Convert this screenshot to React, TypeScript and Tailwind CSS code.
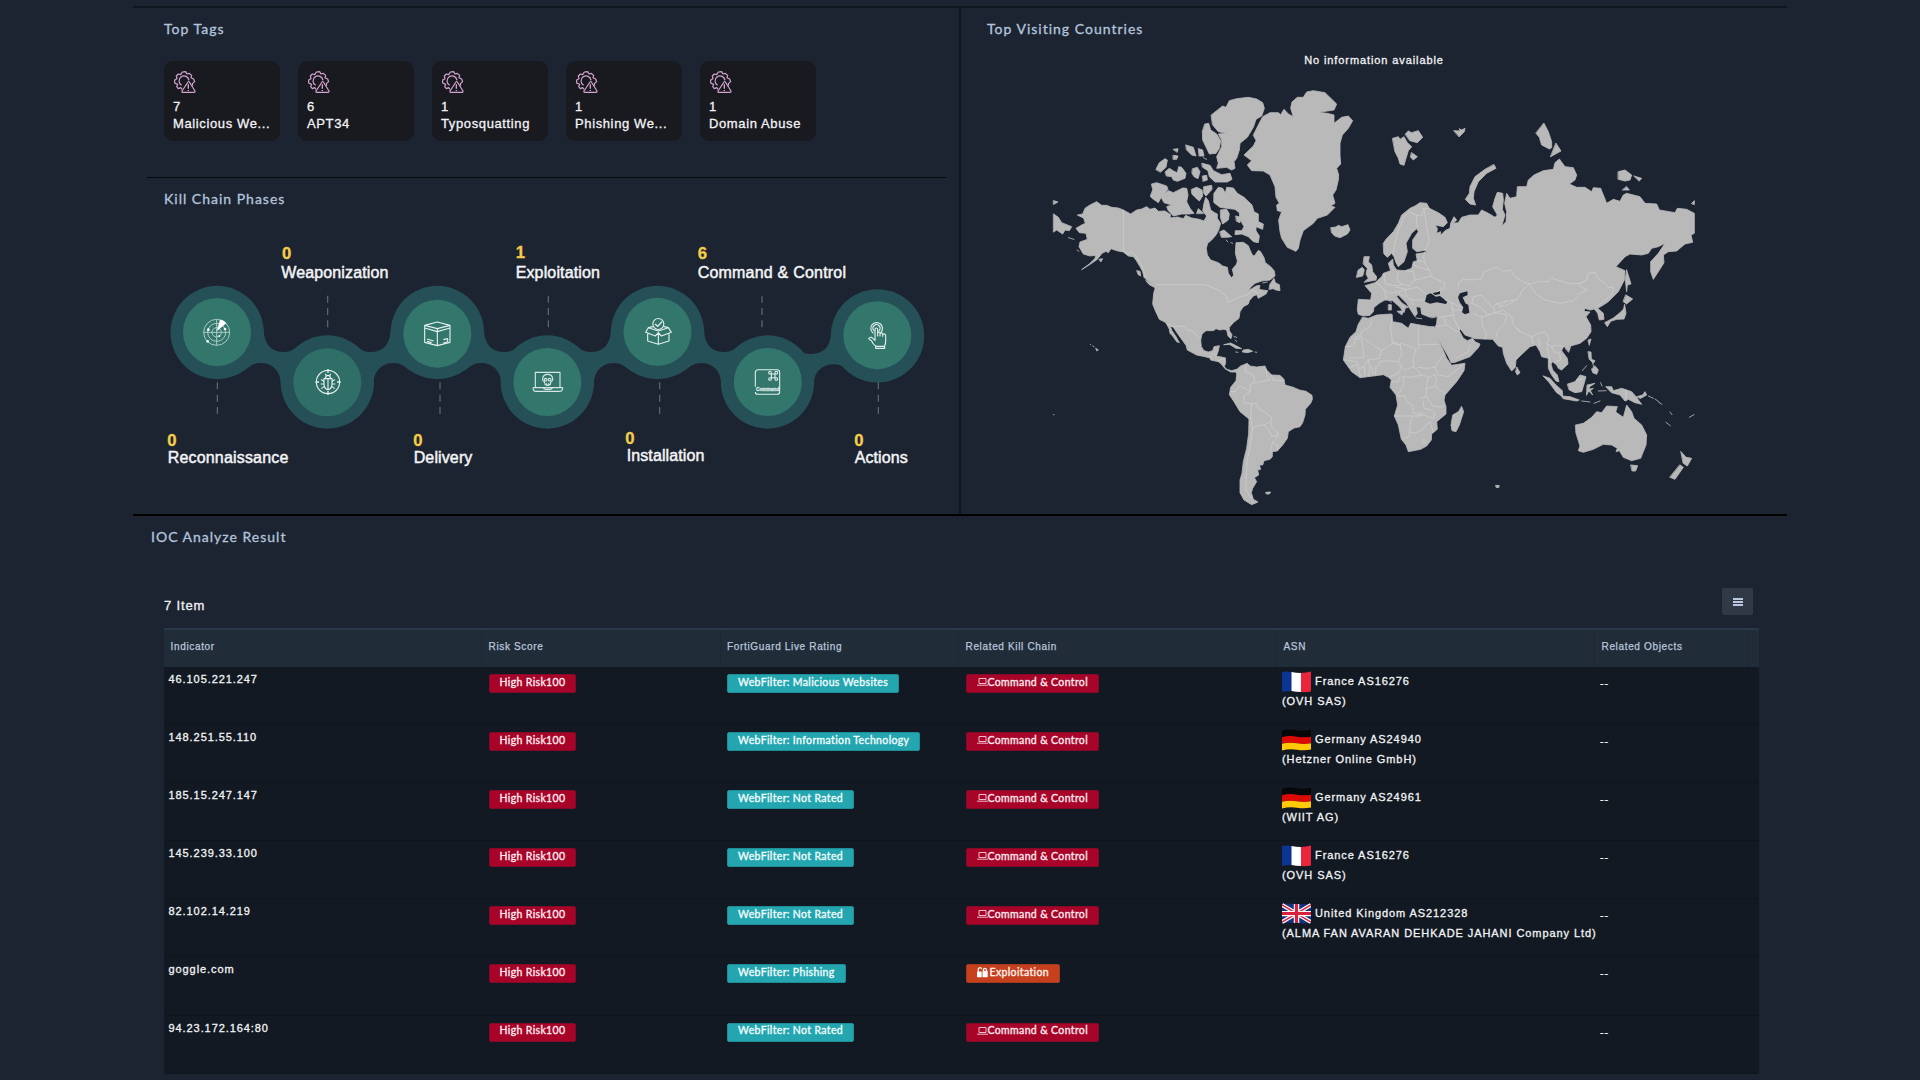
import React from 'react';

const tags = [
  { count: 7, name: 'Malicious We...' },
  { count: 6, name: 'APT34' },
  { count: 1, name: 'Typosquatting' },
  { count: 1, name: 'Phishing We...' },
  { count: 1, name: 'Domain Abuse' },
];

type Row = {
  ip: string;
  rating: string;
  chain: 'c2' | 'exploit';
  flag?: 'fr' | 'de' | 'gb';
  asn?: string;
  org?: string;
};

const rows: Row[] = [
  { ip: '46.105.221.247', rating: 'Malicious Websites', chain: 'c2', flag: 'fr', asn: 'France AS16276', org: '(OVH SAS)' },
  { ip: '148.251.55.110', rating: 'Information Technology', chain: 'c2', flag: 'de', asn: 'Germany AS24940', org: '(Hetzner Online GmbH)' },
  { ip: '185.15.247.147', rating: 'Not Rated', chain: 'c2', flag: 'de', asn: 'Germany AS24961', org: '(WIIT AG)' },
  { ip: '145.239.33.100', rating: 'Not Rated', chain: 'c2', flag: 'fr', asn: 'France AS16276', org: '(OVH SAS)' },
  { ip: '82.102.14.219', rating: 'Not Rated', chain: 'c2', flag: 'gb', asn: 'United Kingdom AS212328', org: '(ALMA FAN AVARAN DEHKADE JAHANI Company Ltd)' },
  { ip: 'goggle.com', rating: 'Phishing', chain: 'exploit' },
  { ip: '94.23.172.164:80', rating: 'Not Rated', chain: 'c2' },
];

const Heading = ({ children }: { children: React.ReactNode }) => (
  <h2 className="h-5 font-[Lato,sans-serif] text-[14px] leading-5 tracking-[1px] whitespace-nowrap text-[#b3c5dd] [-webkit-text-stroke:0.3px_#b3c5dd]">
    {children}
  </h2>
);

const TagIcon = () => (
  <svg width="22" height="22" viewBox="0 0 66 66" fill="none" stroke="#d3a4cf" strokeWidth="3.6" strokeLinejoin="round">
    <path d="M24 55 L20 50 L13 53 L8 47 L11 40 L2 36 L2 27 L9 23 L7 15 L13 9 L20 11 L25 3 L35 2 L39 9 L46 7 L53 13 L51 20 L59 24 L62 32 L55 38 L56 44" />
    <path d="M23 43 A15 15 0 1 1 45 28" />
    <path d="M42 33 Q44 30 46 33 L63 60 Q64 64 60 64 L26 64 Q23 64 24 60 Z" />
    <path d="M43 40 V53 M43 57 V60" strokeWidth="4" />
  </svg>
);

/* Bridge between two neighbouring circles; 330 units from centre to centre */
const BRIDGE =
  'M341 300 C343 345 365 366 402 366 C428 366 438 352 452 342 L532 456 L393 462 C391 420 366 399 332 399 C306 399 296 413 282 422 L201 307 Z';

const KillChain = () => (
  <svg width="800" height="250" viewBox="0 0 2400 750" className="ml-[17px] block" fontFamily="Liberation Sans, Arial, sans-serif">
    <g fill="#255057">
      <path d={BRIDGE} />
      <path d={BRIDGE} transform="translate(1063 0) scale(-1 1)" />
      <path d={BRIDGE} transform="translate(661 0)" />
      <path d={BRIDGE} transform="translate(1724 0) scale(-1 1)" />
      <path d={BRIDGE} transform="translate(1321 0)" />
      <path d={BRIDGE} transform="translate(2384 28) scale(-1 .94)" />
      <circle cx="201.500" cy="307.500" r="140" />
      <circle cx="532" cy="456" r="140" />
      <circle cx="862" cy="307.500" r="140" />
      <circle cx="1192" cy="456" r="140" />
      <circle cx="1522.500" cy="307.500" r="140" />
      <circle cx="1852.500" cy="456" r="140" />
      <circle cx="2182.500" cy="317.500" r="140" />
    </g>
    <g fill="#33766c">
      <circle cx="201" cy="306" r="102" />
      <circle cx="532" cy="457" r="102" fill="#306e68" />
      <circle cx="862" cy="311" r="102" />
      <circle cx="1192" cy="456" r="102" />
      <circle cx="1522.500" cy="305.500" r="102" />
      <circle cx="1853.500" cy="456" r="102" />
      <circle cx="2182" cy="315.500" r="102" />
    </g>
    <g stroke="#626975" strokeWidth="3.500" strokeDasharray="21 16">
      <path d="M533 197 V292 M1195 197 V292 M1836 197 V292" />
      <path d="M202 457 V552 M870 457 V552 M1529 457 V552 M2185 457 V552" />
    </g>

    {/* radar */}
    <g fill="none" stroke="#a9cbc5" strokeWidth="3">
      <circle cx="200" cy="307" r="39" />
      <circle cx="200" cy="307" r="27" />
      <circle cx="200" cy="307" r="14" />
      <path d="M161 307 H239 M200 268 V346" />
      <path d="M200 304 L210 269 Q222 270 229 280 Z" fill="#fff" stroke="none" />
      <g fill="#fff" stroke="none">
        <circle cx="175" cy="299" r="4" />
        <circle cx="225" cy="297" r="4" />
        <circle cx="208" cy="318" r="3" />
        <circle cx="173" cy="334" r="4" />
      </g>
    </g>
    {/* bug in crosshair */}
    <g fill="none" stroke="#e3efed" strokeWidth="3.400">
      <circle cx="534" cy="456" r="35" />
      <path d="M534 417 V429 M534 483 V495 M496 456 H507 M561 456 H572" strokeWidth="4" />
      <path d="M522 446 H546 V464 Q544 478 534 479 Q524 478 522 464 Z M526 446 Q527 436 534 436 Q541 436 542 446 M534 446 V479 M522 455 L513 448 M522 462 H512 M523 469 L514 476 M546 455 L555 448 M546 462 H556 M545 469 L554 476 M529 438 L526 431 M539 438 L542 431" />
    </g>
    {/* package */}
    <g fill="none" stroke="#e3efed" strokeWidth="3.400" strokeLinejoin="round">
      <path d="M824 286 L862 276 L900 286 L862 296 Z M824 286 V337 L862 347 L900 337 V286 M862 296 V347 M824 294 L862 305 L900 294" />
      <path d="M831 327 L851 333 M831 334 L845 338 M880 329 L893 326 V335 L880 339" />
    </g>
    {/* laptop with skull */}
    <g transform="translate(1170 0)" fill="none" stroke="#d5e6e3" strokeWidth="3.400" strokeLinejoin="round">
      <path d="M-14 472 V427 H60 V472 M-21 473 H68 Q68 484 58 484 H-12 Q-21 484 -21 473 M10 474 Q12 478 17 478 H30 Q35 478 37 474" />
      <path d="M14 460 V456 Q7 453 8 446 Q9 433 23 433 Q37 433 38 446 Q39 453 32 456 V460 Q31 466 23 466 Q15 466 14 460 M20 460 V465 M26 460 V465" />
      <circle cx="17" cy="449" r="4" />
      <circle cx="29" cy="449" r="4" />
    </g>
    {/* open box with check */}
    <g transform="translate(1170 0)" fill="none" stroke="#e3efed" strokeWidth="3.400" strokeLinejoin="round" strokeLinecap="round">
      <circle cx="355" cy="282" r="16.500" />
      <path d="M346 283 L353 289 L365 276" strokeWidth="4" />
      <path d="M339 290 L325 293 L317 307 L346 318 L355 308 L364 318 L394 307 L385 293 L372 290 M325 293 L355 303 L385 293 M323 311 V333 L355 343 L387 333 V311 M355 308 V343" />
    </g>
    {/* command key */}
    <g transform="translate(1170 0)" fill="none" stroke="#e3efed" strokeWidth="3.200">
      <path d="M646 470 V428 Q646 419 655 419 H711 Q719 419 719 427 V485 Q719 493 711 493 H654 Q646 493 646 486" />
      <path d="M694 432 H705 V443 H694 Z M694 432 V428 A4 4 0 1 0 690 432 Z M705 432 H709 A4 4 0 1 0 705 428 Z M705 443 V447 A4 4 0 1 0 709 443 Z M694 443 H690 A4 4 0 1 0 694 447 Z" />
      <text x="648" y="484" fontSize="17" fontWeight="700" fill="#e3efed" stroke="#e3efed" strokeWidth=".8" textLength="70" lengthAdjust="spacingAndGlyphs">Command</text>
    </g>
    {/* tapping hand */}
    <g transform="translate(1170 0)" fill="none" stroke="#e3efed" strokeWidth="3.400" strokeLinejoin="round" strokeLinecap="round">
      <path d="M999 309 A17.500 17.500 0 1 1 1023 307 M1002 302 A10.500 10.500 0 1 1 1017 302" />
      <path d="M1005 331 V299 Q1005 294 1009 294 Q1013 294 1013 299 V318 M1013 310 Q1014 305 1020 307 V318 M1020 311 Q1027 306 1028 313 V319 M1028 313 Q1036 309 1037 317 V334 Q1037 341 1034 347 V355 H1007 V348 Q999 343 995 333 L986 326 Q988 321 995 322 L1005 331 M1007 349 H1034" />
    </g>

    <g fill="#f5cc4a" stroke="#f5cc4a" strokeWidth="1" fontWeight="700" fontSize="50">
      <text x="396" y="86">0</text>
      <text x="1097" y="83">1</text>
      <text x="1643" y="86">6</text>
      <text x="52" y="649">0</text>
      <text x="790" y="649">0</text>
      <text x="1426" y="643">0</text>
      <text x="2113" y="649">0</text>
    </g>
    <g fill="#f4f5f7" stroke="#f4f5f7" strokeWidth="1.400" fontSize="48">
      <text x="394" y="144" textLength="321">Weaponization</text>
      <text x="1097" y="144" textLength="253">Exploitation</text>
      <text x="1643" y="144" textLength="445">Command &amp; Control</text>
      <text x="53" y="699" textLength="362">Reconnaissance</text>
      <text x="791" y="699" textLength="176">Delivery</text>
      <text x="1430" y="693" textLength="233">Installation</text>
      <text x="2114" y="699" textLength="159">Actions</text>
    </g>
  </svg>
);

const WorldMap = () => (
  <svg width="740" height="430" viewBox="0 0 2220 1290" className="ml-[79px] block" strokeLinejoin="round" strokeLinecap="round">
    <g fill="#b9b9b9" stroke="#b9b9b9" strokeWidth="2.500">
      {/* North and Central America */}
      <path d="M113 405 L128 402 L135 385 L150 375 L170 365 L185 376 L200 376 L215 382 L235 384 L250 390 L272 402 L290 390 L305 387 L320 380 L330 388 L345 384 L355 394 L375 393 L392 404 L390 414 L412 411 L430 416 L437 406 L455 414 L478 418 L492 423 L500 408 L488 393 L492 370 L497 352 L505 362 L512 390 L524 398 L532 402 L532 415 L542 430 L536 450 L528 465 L515 480 L503 490 L499 505 L502 525 L512 540 L535 548 L548 558 L562 562 L565 580 L575 594 L581 585 L577 568 L590 552 L592 542 L586 520 L588 488 L610 487 L625 497 L630 510 L637 525 L643 528 L655 511 L662 515 L672 533 L676 548 L692 560 L703 573 L705 588 L690 600 L665 603 L645 610 L632 622 L626 632 L648 618 L660 616 L657 628 L668 630 L683 632 L678 642 L655 655 L650 644 L640 648 L628 662 L625 672 L610 680 L600 695 L597 715 L580 728 L568 742 L568 752 L576 764 L573 776 L564 768 L560 750 L550 748 L540 750 L528 746 L520 752 L498 752 L486 762 L482 780 L484 800 L492 812 L505 816 L518 812 L522 800 L538 797 L535 812 L529 830 L540 830 L556 834 L557 848 L553 860 L560 868 L575 872 L590 868 L590 876 L572 876 L555 866 L544 852 L535 845 L512 840 L510 834 L495 830 L470 825 L442 810 L438 796 L428 782 L415 764 L400 742 L390 738 L396 752 L408 770 L418 788 L410 785 L398 768 L390 760 L388 748 L378 728 L358 718 L345 690 L338 672 L341 640 L346 622 L338 612 L320 600 L312 592 L308 575 L300 560 L288 540 L280 530 L265 528 L250 516 L230 512 L213 506 L205 518 L198 514 L186 520 L172 538 L155 550 L125 569 L148 552 L164 536 L168 526 L150 528 L130 522 L117 500 L120 486 L142 478 L138 460 L118 458 L108 445 L125 435 L136 430 L131 415 Z" />
      <path d="M41 402 L55 412 L65 428 L95 440 L88 452 L75 450 L68 462 L50 450 L41 456 Z M41 362 L54 366 L41 373 Z M85 473 L102 478 M111 510 L117 514 M178 538 L188 536 L183 545 Z M291 572 L300 574 L302 588 L295 584 Z M318 602 L345 616 L347 624 L328 614 Z M690 612 L702 595 L706 608 L718 614 L720 632 L708 630 L700 626 L688 628 Z M668 609 L682 606" />
      {/* Arctic archipelago */}
      <path d="M514 105 L530 92 L548 78 L558 82 L568 62 L590 56 L625 52 L650 57 L668 68 L673 85 L665 108 L648 118 L640 142 L622 172 L600 190 L598 210 L590 235 L582 245 L585 265 L575 270 L560 262 L530 265 L535 250 L530 230 L545 200 L545 180 L535 162 L560 160 L535 155 L518 135 Z" />
      <path d="M495 132 L506 130 L512 150 L530 162 L542 182 L538 205 L528 220 L508 222 L500 205 L488 180 L487 155 Z M438 195 L460 202 L468 228 L455 225 L440 210 Z M476 206 L488 210 L492 228 L478 228 Z M400 208 L414 206 L412 216 Z M400 226 L414 228 L410 238 L400 238 Z M348 268 L358 248 L375 236 L382 240 L378 262 L362 276 Z M376 275 L388 265 L402 274 L412 278 L416 260 L425 262 L438 280 L435 295 L412 304 L400 300 L395 290 L380 288 Z M458 266 L472 262 L480 275 L474 296 L462 290 L456 280 Z M486 250 L510 256 L520 272 L545 284 L570 280 L576 298 L562 306 L525 306 L508 290 L504 272 L488 262 Z M488 288 L500 286 L502 300 L490 304 Z M490 233 L500 238" />
      <path d="M335 312 L350 308 L380 318 L384 328 L372 342 L362 355 L355 368 L335 354 L331 348 L338 330 Z M368 345 L385 332 L400 338 L412 332 L428 324 L440 325 L444 345 L440 365 L450 385 L462 400 L448 402 L425 402 L400 408 L385 392 L380 380 L395 375 L372 368 L365 355 Z M455 328 L470 322 L486 330 L488 348 L478 363 L465 352 L456 342 Z M492 320 L515 316 L516 328 L498 348 L490 338 Z M470 400 L475 386 L490 400 Z" />
      <path d="M522 340 L535 322 L548 325 L556 340 L560 322 L580 324 L592 340 L612 352 L636 375 L642 395 L655 402 L655 425 L670 432 L668 448 L648 440 L648 452 L658 468 L655 488 L640 485 L625 470 L605 462 L585 464 L586 452 L605 452 L612 440 L600 418 L598 398 L585 388 L560 385 L540 382 L522 368 Z M542 390 L560 388 L568 402 L565 420 L548 432 L542 415 Z M540 455 L552 450 L575 470 L560 472 L545 472 Z M588 408 L602 412 L600 428 L590 424 Z M558 480 L564 486 M573 488 L578 490" />
      {/* Greenland, Iceland */}
      <path d="M640 165 L655 135 L668 110 L690 98 L715 98 L722 104 L732 88 L745 102 L760 110 L752 85 L756 66 L772 52 L790 52 L800 36 L820 32 L855 38 L890 72 L882 90 L835 97 L862 100 L882 105 L882 130 L905 112 L925 108 L938 122 L925 145 L907 165 L900 190 L900 225 L902 252 L890 265 L896 285 L895 300 L888 330 L878 345 L885 370 L872 378 L885 382 L862 405 L832 415 L820 430 L790 452 L780 480 L775 505 L768 514 L742 502 L725 475 L720 455 L716 420 L725 395 L712 392 L710 375 L718 370 L708 352 L705 320 L690 285 L670 273 L635 272 L622 255 L635 242 L612 225 L640 198 L648 182 Z" />
      <path d="M873 443 L888 441 L895 436 L905 440 L924 434 L930 450 L922 462 L900 473 L884 468 L875 458 Z" />

      {/* South America and the Caribbean */}
      <g transform="translate(0 600)">
        <path d="M588 270 L602 258 L622 250 L630 258 L650 261 L675 258 L680 270 L695 285 L720 286 L732 298 L735 315 L760 322 L778 330 L798 334 L816 346 L817 358 L812 370 L796 388 L795 405 L788 428 L780 440 L762 444 L745 455 L742 475 L728 495 L712 513 L697 515 L697 530 L690 538 L672 542 L668 555 L658 555 L662 568 L653 570 L656 585 L643 593 L650 605 L638 625 L634 638 L640 658 L654 666 L635 674 L612 660 L600 638 L600 600 L606 580 L610 545 L620 505 L626 460 L627 417 L600 395 L582 365 L568 344 L572 322 L588 302 L590 285 Z" />
        <path d="M552 194 L572 189 L590 198 L605 206 L588 205 L570 194 Z M610 210 L625 208 L638 214 L622 218 L608 216 Z M587 216 L594 217 M645 216 L650 217 M582 170 L590 172 M586 180 L590 185 M678 637 L692 636 L688 642 L680 642 Z M168 205 L175 210 L171 212 Z M158 198 L162 200 M151 194 L152 194 M40 404 L42 404" />
      </g>

      {/* Europe and Asia */}
      <g transform="translate(870 0)">
        <path d="M160 490 L168 478 L190 455 L205 430 L215 405 L240 385 L255 378 L270 368 L290 370 L298 385 L325 398 L345 412 L352 428 L340 440 L315 435 L322 445 L320 460 L332 455 L332 466 L345 452 L360 445 L362 430 L372 410 L380 420 L370 430 L385 428 L395 412 L420 405 L445 405 L455 390 L475 400 L495 412 L502 405 L488 380 L495 355 L502 337 L518 340 L520 360 L517 388 L525 405 L515 438 L528 425 L530 395 L524 370 L530 340 L540 355 L560 350 L562 320 L590 320 L595 300 L612 285 L640 272 L670 268 L675 248 L688 237 L705 260 L730 263 L740 285 L735 300 L718 312 L740 322 L765 322 L785 335 L790 323 L812 325 L820 345 L830 370 L850 358 L870 364 L880 345 L890 340 L930 350 L945 370 L980 372 L988 390 L1035 398 L1042 385 L1070 388 L1093 400 L1093 460 L1083 465 L1088 487 L1065 492 L1040 513 L1015 515 L1000 525 L1002 548 L985 575 L970 598 L962 575 L962 545 L985 520 L1005 490 L985 500 L965 505 L955 520 L935 525 L900 522 L885 530 L858 560 L885 572 L883 600 L865 635 L835 665 L820 675 L803 685 L820 700 L822 718 L808 720 L803 700 L793 687 L780 690 L765 685 L762 694 L780 696 L768 710 L782 735 L783 755 L770 775 L750 790 L725 797 L712 803 L700 800 L695 812 L712 835 L714 852 L695 870 L685 865 L680 855 L668 845 L663 852 L668 870 L682 885 L687 905 L678 903 L665 885 L655 865 L655 835 L635 830 L630 815 L618 795 L600 800 L570 828 L558 840 L556 862 L545 873 L530 850 L520 820 L518 802 L505 798 L488 778 L435 776 L425 772 L405 765 L392 748 L388 752 L400 775 L412 782 L428 775 L435 785 L450 792 L446 802 L420 830 L375 847 L363 848 L355 830 L335 795 L315 762 L313 750 L320 730 L322 709 L300 712 L275 702 L272 682 L258 680 L262 700 L255 710 L242 690 L230 670 L205 645 L200 650 L215 668 L235 682 L226 684 L222 698 L210 682 L188 662 L165 660 L150 668 L132 682 L130 695 L120 706 L100 708 L85 703 L82 690 L85 658 L122 660 L125 640 L105 617 L135 608 L155 590 L160 580 L182 572 L175 550 L188 537 L190 555 L200 570 L225 572 L245 565 L250 545 L262 542 L258 522 L290 517 L285 511 L260 515 L248 505 L248 480 L265 455 L260 446 L245 460 L228 490 L232 515 L222 545 L205 560 L198 548 L192 530 L185 520 L172 532 L162 522 Z" />
        <path d="M188 175 L205 170 L210 178 L222 170 L232 188 L245 200 L235 212 L228 235 L222 256 L210 252 L205 235 L195 215 Z M226 162 L235 153 L245 158 L265 152 L278 172 L262 188 L240 182 Z M245 218 L262 230 L250 240 L242 232 Z M372 152 L390 153 L388 146 L395 150 L405 145 L403 155 L388 170 Z M492 254 L498 265 L470 280 L445 305 L432 335 L430 355 L437 375 L420 372 L406 358 L418 340 L420 320 L435 290 L465 268 Z M642 130 L655 155 L665 185 L665 203 L658 207 L635 195 L628 172 L618 160 Z M678 190 L693 213 L662 230 Z M865 275 L885 270 L905 285 L900 300 L885 303 L865 298 Z M912 288 L935 295 L928 303 Z M890 320 L898 330 L878 330 Z M1085 370 L1093 362 L1093 373 Z" />
        <path d="M103 530 L118 530 L115 545 L125 555 L128 575 L140 590 L138 600 L102 607 L115 595 L108 582 L112 565 L100 552 Z M85 570 L97 562 L103 570 L98 588 L80 592 Z M890 570 L903 612 L892 615 L890 635 L886 600 Z M888 645 L908 657 L890 672 L880 665 Z M884 674 L888 700 L882 717 L860 718 L842 724 L832 740 L824 728 L850 714 L868 700 L880 688 Z M176 674 L184 674 L184 690 L176 690 Z M178 662 L184 668 M202 694 L220 692 L216 704 Z M258 714 L275 716 M305 714 L318 711 M775 780 L783 777 L778 795 Z M706 804 L722 800 L716 816 Z M561 862 L570 878 L562 885 L557 876 Z" />
      </g>

      {/* Africa, South-East Asia and Oceania */}
      <g transform="translate(870 600)">
        <path d="M98 112 L115 115 L140 105 L185 102 L188 125 L215 130 L235 145 L242 130 L270 135 L300 140 L313 140 L318 165 L335 200 L350 235 L365 256 L405 250 L402 272 L380 305 L345 345 L342 360 L348 380 L348 402 L320 425 L322 448 L305 462 L304 480 L290 498 L272 508 L235 515 L228 495 L214 478 L205 435 L193 408 L203 375 L198 345 L180 322 L184 300 L175 292 L160 284 L130 288 L90 293 L65 275 L40 240 L46 200 L60 172 L78 155 L84 135 Z" />
        <path d="M395 380 L401 395 L388 435 L378 455 L366 452 L363 435 L368 405 L385 395 Z M640 288 L660 295 L678 315 L697 332 L698 350 L680 338 L658 308 Z M695 348 L720 350 L748 360 L740 363 L700 356 Z M713 312 L735 305 L750 285 L768 290 L762 312 L755 335 L735 338 L718 330 Z M772 315 L795 310 L779 320 L777 328 L790 325 L781 332 L788 345 L776 333 L770 345 Z M828 320 L845 320 L850 332 L875 325 L905 335 L918 350 L935 373 L915 368 L895 358 L885 363 L870 345 L845 338 Z M920 350 L938 345 L945 335 L950 345 L932 355 Z M775 215 L783 216 L784 238 L795 242 L790 250 L778 238 Z M795 258 L805 270 L800 283 L788 278 L785 268 Z M757 272 L770 257 M788 250 L792 262 M812 308 L816 318 M755 363 L780 366 M792 370 L810 363 M805 333 L828 332 M955 348 L970 355 M975 357 L985 364 M985 366 L996 373 M1020 396 L1026 404 M1008 427 L1021 437 M1078 412 L1092 404" />
        <path d="M737 435 L760 430 L785 412 L800 395 L815 398 L830 378 L862 380 L857 396 L880 412 L890 375 L905 395 L912 415 L935 435 L950 465 L948 495 L932 535 L905 542 L880 532 L868 512 L858 515 L862 505 L845 495 L820 493 L790 508 L760 517 L745 512 L750 498 L738 460 Z M903 555 L923 557 L917 573 L907 573 Z M1053 515 L1068 532 L1085 535 L1072 558 L1060 550 Z M1050 555 L1060 562 L1035 598 L1020 592 Z M498 616 L508 617 L506 623 L499 622 Z" />
      </g>
    </g>

    {/* enclosed seas */}
    <g fill="#1d2431" transform="translate(870 0)">
      <path d="M285 665 L290 645 L302 640 L318 650 L330 648 L352 665 L348 672 L320 667 L300 671 Z M308 640 L330 634 L330 642 L315 645 Z M384 652 L390 640 L412 634 L413 645 L398 652 L406 670 L415 675 L418 698 L405 703 L396 697 L400 682 L390 668 Z" />
    </g>

    {/* country borders */}
    <g fill="none" stroke="#d2d2d2" strokeWidth="2">
      <path d="M250 390 V513 M250 513 L262 522 L275 515 L290 530 L300 548 L310 565 L315 590 M348 614 H495 L515 622 L540 632 L560 650 L565 668 L580 660 L600 650 L622 645 L635 630 L655 640 M378 730 L400 740 L430 738 L445 752 L458 752 L475 772 L483 778 M510 832 L522 820 L530 830 M535 842 L555 834" />
      <g transform="translate(0 600)">
        <path d="M618 255 L615 275 L640 285 L645 305 L632 312 L630 335 M678 268 L680 285 L690 300 L665 305 L645 308 M695 285 L697 300 L730 302 M573 335 L585 335 L598 318 L615 325 L630 335 L610 350 L612 368 L635 372 L648 370 L655 385 L680 400 L695 412 L692 425 L672 435 L645 438 L637 448 L632 415 M635 372 L632 415 M637 448 L632 490 L622 540 L618 590 L618 630 L635 655 M692 425 L697 445 L713 458 L708 468 L695 468 M672 435 L690 455 L695 468 M713 458 L715 470 L697 488 L692 510 M697 488 L715 498 L712 510" />
      </g>
      <g transform="translate(870 0)">
        <path d="M190 520 L195 490 L205 450 L222 410 L240 395 L258 405 L275 408 L282 385 L298 385 M258 405 L262 440 M282 385 L290 440 L298 485 L285 510 M285 515 L280 530 L285 550 L298 570 L305 590 L345 610 L342 625 L320 635 M262 542 L280 545 M250 555 L275 565 L298 570 M225 572 L250 575 L255 600 L290 592 L305 590 M162 582 L165 610 L180 615 L205 618 L215 612 L200 600 L205 575 M215 612 L235 618 L255 600 M165 630 L180 640 L205 635 L225 630 L245 625 L262 622 L285 640 M225 630 L230 650 L245 660 L280 660 M245 660 L250 675 M205 640 L225 650 M200 622 L230 628 M138 608 L160 625 L165 640 L168 655" />
        <path d="M345 660 L370 670 L390 680 M365 668 L370 705 L340 710 L325 712 M370 690 L395 690 M385 625 L385 608 L400 598 L430 600 L455 595 L462 575 L500 562 L520 575 L542 570 L555 590 L580 605 L598 612 L578 630 L570 645 L560 660 L535 662 L498 672 L490 682 L470 665 L455 645 L430 650 L425 670 M598 612 L625 605 L655 605 L660 593 L700 605 L720 612 L750 610 L770 600 L775 580 L795 577 L805 595 L825 610 L835 622 L850 622 L848 640 L832 655 L800 680 M598 612 L615 640 L645 660 L690 670 L730 662 L750 640 L772 630 L750 618 L750 610 M425 670 L450 680 L475 705 L495 698 L490 682 M495 698 L520 690 L530 700 L545 710 L550 735 L570 755 L605 770 L625 760 L645 755 L658 775 L650 790 L665 800 L682 795 L700 800 M495 698 L510 700 L530 705 L525 730 L505 750 L498 770 M475 705 L455 712 L458 740 L470 760 L465 778 M455 712 L430 700 M370 705 L375 725 L388 745 L385 755 M340 712 L350 735 L380 755 M320 740 L345 735 M570 755 L562 745 M605 770 L610 790 M625 775 L630 800 M650 790 L655 820 L660 845 M665 800 L672 815 L688 818 L692 840 L675 845" />
        <path d="M378 835 L415 815 L420 795 M500 672 L520 680 L550 665 M530 662 L505 685" />
      </g>
      <g transform="translate(870 600)">
        <path d="M125 118 L122 138 L95 155 L90 168 L78 170 M187 105 L182 145 L187 185 L210 195 L215 190 M46 200 L72 198 L75 175 L95 178 L102 232 L58 235 M90 168 L155 212 L187 190 M265 138 V205 M265 193 H325 M215 190 L258 208 M155 212 L148 235 L115 240 L100 262 L85 265 M187 190 L210 195 L215 220 L205 245 L170 242 L150 245 L145 260 M45 240 L80 245 L85 265 L92 290 M62 262 L80 255 M115 240 L120 262 L115 287 M125 260 L130 285 M138 258 L137 285 M103 262 L105 288 M205 245 L215 260 L205 280 L180 290 M258 208 L250 235 L252 260 L225 270 L215 260 M252 260 L275 285 L295 292 L315 285 M265 262 L290 265 L315 262 L340 222 M315 262 L325 285 L355 290 L380 270 L400 252 M218 290 L245 292 L275 285 M218 290 L222 310 L210 335 L200 345 M185 305 L205 305 L210 290 M200 348 L225 348 L232 365 L248 375 L250 400 L275 400 L262 408 L193 408 M295 292 L290 320 L288 350 L300 365 L310 380 L340 380 M315 285 L320 300 L315 318 L345 340 M288 325 L315 320 M288 350 L270 355 M280 365 L282 385 L305 390 L315 400 L310 415 L300 412 L280 405 L262 408 M245 412 L240 440 L238 470 L222 475 M240 455 L255 460 L275 450 L300 425 M300 425 L310 455 M275 485 L283 478 L288 485 L280 490 Z M888 330 V362 M740 300 L755 298" />
      </g>
    </g>
  </svg>
);

const FlagBody = ({ kind }: { kind: 'fr' | 'de' | 'gb' }) => {
  if (kind === 'fr')
    return (
      <g>
        <path d="M0 1 Q5 0 9.500 1 V21 Q5 21 0 22 Z" fill="#0a3594" />
        <path d="M9.500 1 Q14 2 19 2 V22 Q14 22 9.500 21 Z" fill="#fff" />
        <path d="M19 2 Q24 2 29 .5 V21.500 Q24 22.500 19 22 Z" fill="#e8253a" />
      </g>
    );
  if (kind === 'de')
    return (
      <g>
        <path d="M0 1.500 Q7 -.5 15 1.200 Q23 2.500 29 .7 V8 Q22 9.500 15 8 Q7 6.500 0 8.500 Z" fill="#070707" />
        <path d="M0 8.500 Q7 6.500 15 8 Q22 9.500 29 8 V15 Q22 16.500 15 15 Q7 13.500 0 15.500 Z" fill="#dc0a04" />
        <path d="M0 15.500 Q7 13.500 15 15 Q22 16.500 29 15 V21.500 Q22 23 15 21.700 Q7 20.500 0 22.500 Z" fill="#ffc90a" />
      </g>
    );
  return (
    <g>
      <path d="M0 1 Q7 0 15 1 Q22 2 29 .7 V21 Q22 22 15 21 Q7 20 0 21.500 Z" fill="#16327c" />
      <path d="M0 2 L29 20 M29 2 L0 20" stroke="#fff" strokeWidth="4.200" />
      <path d="M0 2 L29 20 M29 2 L0 20" stroke="#d9203d" strokeWidth="1.500" />
      <path d="M14.500 1 V21 M0 11 H29" stroke="#fff" strokeWidth="5.500" />
      <path d="M14.500 1 V21 M0 11 H29" stroke="#d9203d" strokeWidth="3.200" />
    </g>
  );
};

const Flag = ({ kind }: { kind: 'fr' | 'de' | 'gb' }) => (
  <svg width="29" height="22" viewBox="0 0 29 23" preserveAspectRatio="none" className="shrink-0">
    <FlagBody kind={kind} />
  </svg>
);

const LaptopIcon = () => (
  <svg width="11" height="10" viewBox="0 0 11 10" className="shrink-0" fill="none" stroke="#f0bcc7" strokeWidth="1">
    <path d="M2 6.500 V1.500 H9 V6.500 Z M0 8.200 H11" />
  </svg>
);

const LocksIcon = () => (
  <svg width="11" height="11" viewBox="0 0 11 11" className="mr-[2px] shrink-0" fill="#fff">
    <path d="M6.300 4 V2.500 A1.700 1.700 0 0 1 9.500 2.500 V4" fill="none" stroke="#fff" strokeWidth="1.200" />
    <path d="M1.300 5 V3 A1.700 1.700 0 0 1 4.600 2" fill="none" stroke="#fff" strokeWidth="1.200" />
    <rect x="0" y="4.500" width="4.700" height="5.800" rx=".9" />
    <rect x="5.500" y="3.800" width="5.200" height="6.500" rx=".9" />
  </svg>
);

const badge =
  'flex h-[19px] items-center rounded-[2px] border px-[10px] pb-[3px] font-[Lato,sans-serif] text-[10.500px] leading-none tracking-[0.36px] whitespace-nowrap';
const redBadge = 'border-[#850a28] bg-[#a80328] text-[#fbe9ed] [-webkit-text-stroke:0.35px_#fbe9ed]';
const badgeCell = 'flex items-start pt-[7px] pl-[6.500px]';

const COLS = 'grid grid-cols-[318px_238.500px_238.500px_318px_318px_152.500px_1fr]';
const cellText =
  'text-[11px] leading-4 tracking-[0.92px] text-[#f2f3f5] [-webkit-text-stroke:0.3px_#f2f3f5] whitespace-nowrap';

export default function App() {
  return (
    <div className="h-[1080px] w-[1920px] overflow-hidden bg-[#1d2431] pt-[6px] font-['Liberation_Sans',Arial,sans-serif]">
      <main className="ml-[133px] w-[1654px]">
        <section className="flex h-[510px] border-t-2 border-b-2 border-t-[#10161e] border-b-black">
          <div className="w-[828px] border-r-2 border-[#10161e]">
            <div className="mt-[11px] ml-[31px]">
              <Heading>Top Tags</Heading>
            </div>
            <div className="mt-[22px] ml-[31px] flex gap-[18px]">
              {tags.map((t) => (
                <div key={t.name} className="h-20 w-[116px] rounded-[9px] bg-[#191920] pt-[10px] pl-[9px]">
                  <div className="pl-px">
                    <TagIcon />
                  </div>
                  <div className="mt-[5px] text-[13px] leading-[17px] tracking-[0.62px] whitespace-nowrap text-[#f2f3f5] [-webkit-text-stroke:0.3px_#f2f3f5]">
                    <div>{t.count}</div>
                    <div>{t.name}</div>
                  </div>
                </div>
              ))}
            </div>
            <div className="mt-9 ml-[14px] h-px w-[799px] bg-[#06090d]" />
            <div className="mt-[11px] ml-[31px]">
              <Heading>Kill Chain Phases</Heading>
            </div>
            <div className="mt-[21px]">
              <KillChain />
            </div>
          </div>
          <div className="w-[826px]">
            <div className="mt-[11px] ml-[26px]">
              <Heading>Top Visiting Countries</Heading>
            </div>
            <div className="mt-[13px] text-center text-[11px] leading-4 tracking-[0.9px] text-[#f2f3f5] [-webkit-text-stroke:0.3px_#f2f3f5]">
              No information available
            </div>
            <div className="mt-3">
              <WorldMap />
            </div>
          </div>
        </section>

        <section>
          <div className="ml-[18px] pt-[11px]">
            <Heading>IOC Analyze Result</Heading>
          </div>
          <div className="mt-[41px] ml-[31px] flex h-10 w-[1589px] items-start justify-between">
            <div className="mt-2 text-[13px] leading-5 tracking-[0.85px] text-[#f2f3f5] [-webkit-text-stroke:0.3px_#f2f3f5]">7 Item</div>
            <button className="flex h-[27px] w-[31px] flex-col items-center justify-center gap-px rounded-[2px] bg-[#323946]">
              <span className="h-[2px] w-[10px] bg-[#b9c9e0]" />
              <span className="h-[2px] w-[10px] bg-[#b9c9e0]" />
              <span className="h-[2px] w-[10px] bg-[#b9c9e0]" />
            </button>
          </div>
          <div className="ml-[31px] w-[1595px]">
            <div className={`${COLS} h-[39px] border-t-2 border-[#2b384b] bg-[#212c39]`}>
              {['Indicator', 'Risk Score', 'FortiGuard Live Rating', 'Related Kill Chain', 'ASN', 'Related Objects'].map((h) => (
                <div
                  key={h}
                  className="border-r border-[#1d2733] pt-[9px] pl-[6.500px] text-[10px] leading-4 tracking-[0.66px] whitespace-nowrap text-[#b9c7da] [-webkit-text-stroke:0.25px_#b9c7da]"
                >
                  {h}
                </div>
              ))}
              <div />
            </div>
            {rows.map((r) => (
              <div key={r.ip} className={`${COLS} h-[58.100px] border-b border-[#0f151c] bg-[#121922]`}>
                <div className={`${cellText} pt-[4px] pl-[4.500px]`}>{r.ip}</div>
                <div className={badgeCell}>
                  <span className={`${badge} ${redBadge}`}>High Risk100</span>
                </div>
                <div className={badgeCell}>
                  <span className={`${badge} border-[#1f8d96] bg-[#23a6b0] text-[#f1fbfb] [-webkit-text-stroke:0.35px_#f1fbfb]`}>
                    WebFilter: {r.rating}
                  </span>
                </div>
                <div className={badgeCell}>
                  {r.chain === 'c2' ? (
                    <span className={`${badge} ${redBadge}`}>
                      <LaptopIcon />
                      Command &amp; Control
                    </span>
                  ) : (
                    <span className={`${badge} border-[#a03a20] bg-[#c6401e] text-[#fdf0ec] [-webkit-text-stroke:0.35px_#fdf0ec]`}>
                      <LocksIcon />
                      Exploitation
                    </span>
                  )}
                </div>
                <div className="pt-[4px] pl-[5px]">
                  {r.flag && (
                    <>
                      <div className="flex h-[22px] gap-1">
                        <Flag kind={r.flag} />
                        <span className={`${cellText} mt-[2px]`}>{r.asn}</span>
                      </div>
                      <div className={cellText}>{r.org}</div>
                    </>
                  )}
                </div>
                <div className={`${cellText} pt-[8px] pl-[5px]`}>--</div>
                <div />
              </div>
            ))}
          </div>
        </section>
      </main>
    </div>
  );
}
